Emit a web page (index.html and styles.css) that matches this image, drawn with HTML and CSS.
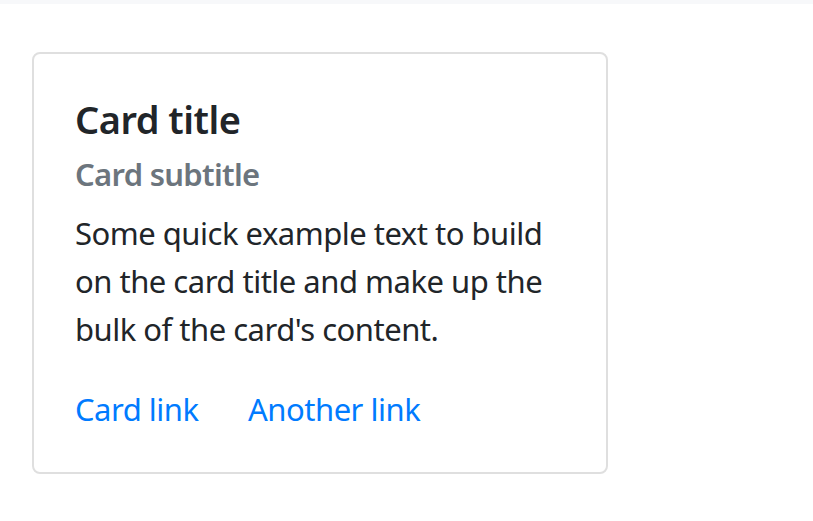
FILE: index.html
```html
<!DOCTYPE html>
<html lang="en">
<head>
<meta charset="utf-8">
<title>Card</title>
<link rel="stylesheet" href="styles.css">
</head>
<body>
<div class="topbar"></div>
<main class="page">
  <div class="card">
    <div class="card-body">
      <h5 class="card-title">Card title</h5>
      <h6 class="card-subtitle">Card subtitle</h6>
      <p class="card-text">Some quick example text to build on the card title and make up the bulk of the card's content.</p>
      <a href="#" class="card-link">Card link</a>
      <a href="#" class="card-link">Another link</a>
    </div>
  </div>
</main>
</body>
</html>
```
FILE: styles.css
```css
html, body {
  margin: 0;
  padding: 0;
  background: #fff;
}
body {
  font-family: "Noto Sans", "Open Sans", sans-serif;
  font-size: 31px;
  letter-spacing: -0.5px;
  line-height: 48px;
  color: #212529;
}
.topbar {
  height: 4px;
  background: #f7f8fa;
}
.page {
  padding: 48px 0 0 32px;
}
.card {
  box-sizing: border-box;
  width: 576px;
  border: 2px solid #dfdfdf;
  border-radius: 8px;
  background: #fff;
}
.card-body {
  padding: 41px 40px 39px 41px;
}
.card-title {
  margin: 0 0 24px 0;
  font-size: 38px;
  font-weight: 600;
  line-height: 48px;
}
.card-subtitle {
  margin: -12px 0 16px 0;
  font-size: 31px;
  font-weight: 600;
  letter-spacing: -0.7px;
  line-height: 38px;
  color: #6c757d;
}
.card-text {
  margin: 0 0 32px 0;
}
.card-link {
  color: #007bff;
  text-decoration: none;
}
.card-link + .card-link {
  margin-left: 42px;
}
```
